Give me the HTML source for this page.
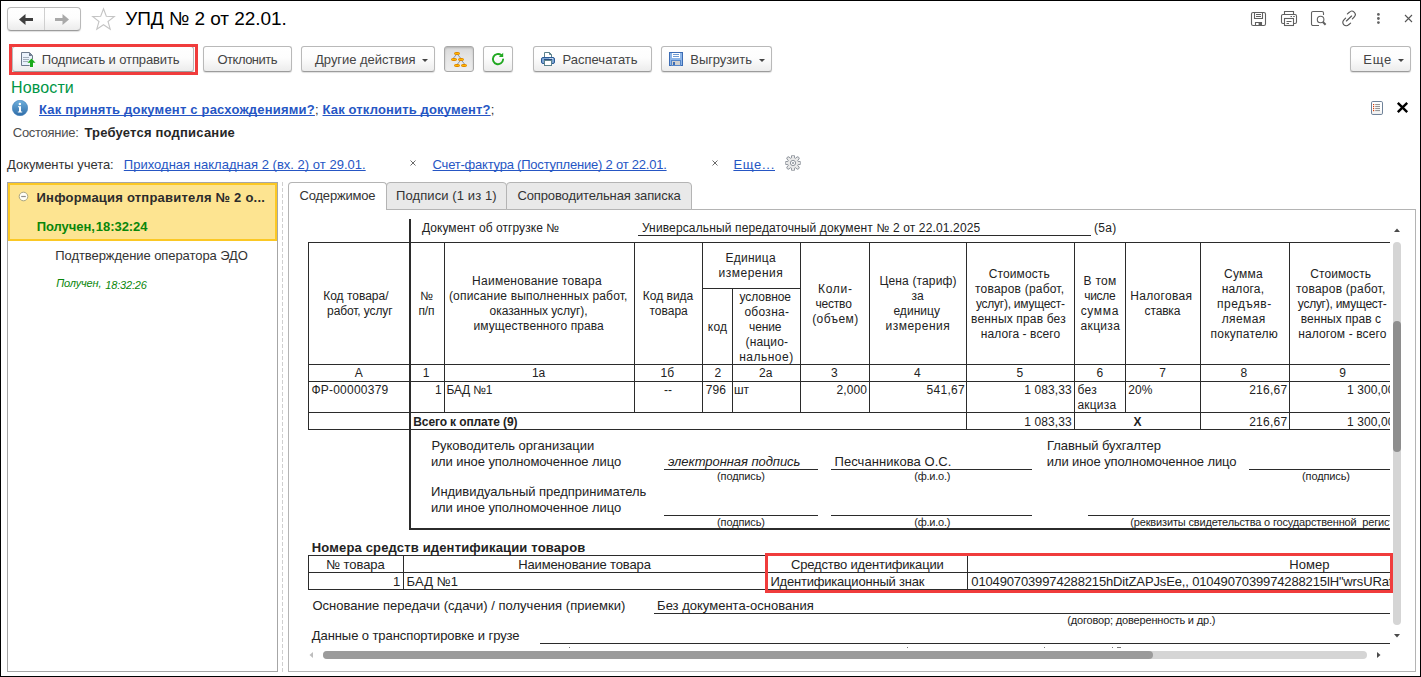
<!DOCTYPE html>
<html lang="ru">
<head>
<meta charset="utf-8">
<title>УПД № 2 от 22.01.</title>
<style>
*{margin:0;padding:0;box-sizing:border-box}
html,body{width:1421px;height:677px;overflow:hidden;background:#fff}
body{position:relative;font-family:"Liberation Sans",sans-serif;font-size:13px;color:#333;line-height:1}
.a{position:absolute;white-space:nowrap}
#frame{position:absolute;left:0;top:0;width:1421px;height:677px;border:1px solid #000;z-index:50;pointer-events:none}
.btn{position:absolute;top:46px;height:26px;border:1px solid #b9b9b9;border-bottom-color:#9c9c9c;border-radius:3px;background:linear-gradient(#ffffff 0%,#fdfdfd 45%,#ececec 100%);box-shadow:0 1px 1px rgba(0,0,0,.13);color:#444;font-size:13px;line-height:24px;white-space:nowrap}
.btn span{position:absolute;top:1px}
.btn.pressed{background:linear-gradient(#d9d9d9 0%,#e4e4e4 40%,#eeeeee 100%);border-color:#a9a9a9;box-shadow:inset 0 1px 2px rgba(0,0,0,.18)}
.dd{position:absolute;width:0;height:0;border-left:3.5px solid transparent;border-right:3.5px solid transparent;border-top:3.5px solid #444}
.lnk{color:#2656c4;text-decoration:underline;text-decoration-skip-ink:none;text-underline-offset:1px}
.hl{position:absolute;border:3px solid #f03c3c;z-index:20}
/* document */
#doc{position:absolute;left:0;top:0;width:1390px;height:648px;overflow:hidden;color:#222}
#doc .a{color:#222}
.ln{position:absolute;background:#2b2b2b}
.c{position:absolute;text-align:center;font-size:12px;line-height:15px;color:#222;white-space:nowrap;letter-spacing:.22px;text-indent:.22px}
#doc .a{letter-spacing:.1px}
.t12{font-size:12px}
.sm{font-size:10px}
</style>
<style id="fit">
#ttl{left:125.2px !important;right:auto !important;width:auto !important;text-align:left;text-indent:0;letter-spacing:-0.04px !important}
#b1{left:28.7px !important;right:auto !important;width:auto !important;text-align:left;text-indent:0;letter-spacing:-0.11px !important}
#b2{left:13.5px !important;right:auto !important;width:auto !important;text-align:left;text-indent:0;letter-spacing:-0.50px !important}
#b3{left:13.1px !important;right:auto !important;width:auto !important;text-align:left;text-indent:0;letter-spacing:-0.04px !important}
#b4{left:28.5px !important;right:auto !important;width:auto !important;text-align:left;text-indent:0;letter-spacing:0.01px !important}
#b5{left:28.3px !important;right:auto !important;width:auto !important;text-align:left;text-indent:0;letter-spacing:-0.08px !important}
#b6{left:12.2px !important;right:auto !important;width:auto !important;text-align:left;text-indent:0;letter-spacing:0.80px !important}
#nov{left:11.1px !important;right:auto !important;width:auto !important;text-align:left;text-indent:0;letter-spacing:0.13px !important}
#l1{left:-0.7px !important;right:auto !important;width:auto !important;text-align:left;text-indent:0;letter-spacing:0.20px !important}
#l2{left:282.0px !important;right:auto !important;width:auto !important;text-align:left;text-indent:0;letter-spacing:0.15px !important}
#st{left:84.4px !important;right:auto !important;width:auto !important;text-align:left;text-indent:0;letter-spacing:0.21px !important}
#sost{left:12.8px !important;right:auto !important;width:auto !important;text-align:left;text-indent:0;letter-spacing:-0.28px !important}
#du{left:7.1px !important;right:auto !important;width:auto !important;text-align:left;text-indent:0;letter-spacing:-0.05px !important}
#d1{left:123.8px !important;right:auto !important;width:auto !important;text-align:left;text-indent:0;letter-spacing:0.02px !important}
#d2{left:432.6px !important;right:auto !important;width:auto !important;text-align:left;text-indent:0;letter-spacing:-0.22px !important}
#d3{left:733.4px !important;right:auto !important;width:auto !important;text-align:left;text-indent:0;letter-spacing:0.72px !important}
#lp1{left:36.5px !important;right:auto !important;width:auto !important;text-align:left;text-indent:0;letter-spacing:0.22px !important}
#lp3{left:55.3px !important;right:auto !important;width:auto !important;text-align:left;text-indent:0;letter-spacing:-0.07px !important}
#tb1{left:299.5px !important;right:auto !important;width:auto !important;text-align:left;text-indent:0;letter-spacing:-0.19px !important}
#tb2{left:396.1px !important;right:auto !important;width:auto !important;text-align:left;text-indent:0;letter-spacing:0.09px !important}
#tb3{left:517.4px !important;right:auto !important;width:auto !important;text-align:left;text-indent:0;letter-spacing:-0.11px !important}
#t_doc{left:421.9px !important;right:auto !important;width:auto !important;text-align:left;text-indent:0;letter-spacing:0.06px !important}
#t_upd{left:641.9px !important;right:auto !important;width:auto !important;text-align:left;text-indent:0;letter-spacing:0.14px !important}
#x1{left:1094.1px !important;right:auto !important;width:auto !important;text-align:left;text-indent:0;letter-spacing:0.27px !important}
#x2{left:323.2px !important;right:auto !important;width:auto !important;text-align:left;text-indent:0;letter-spacing:0.00px !important}
#x3{left:327.1px !important;right:auto !important;width:auto !important;text-align:left;text-indent:0;letter-spacing:-0.11px !important}
#x6{left:472.1px !important;right:auto !important;width:auto !important;text-align:left;text-indent:0;letter-spacing:0.26px !important}
#x7{left:448.9px !important;right:auto !important;width:auto !important;text-align:left;text-indent:0;letter-spacing:0.19px !important}
#x8{left:489.6px !important;right:auto !important;width:auto !important;text-align:left;text-indent:0;letter-spacing:-0.05px !important}
#x9{left:473.5px !important;right:auto !important;width:auto !important;text-align:left;text-indent:0;letter-spacing:0.08px !important}
#x12{left:725.5px !important;right:auto !important;width:auto !important;text-align:left;text-indent:0;letter-spacing:0.25px !important}
#x13{left:718.5px !important;right:auto !important;width:auto !important;text-align:left;text-indent:0;letter-spacing:0.50px !important}
#x15{left:739.5px !important;right:auto !important;width:auto !important;text-align:left;text-indent:0;letter-spacing:-0.07px !important}
#x23{left:879.5px !important;right:auto !important;width:auto !important;text-align:left;text-indent:0;letter-spacing:0.14px !important}
#x26{left:885.6px !important;right:auto !important;width:auto !important;text-align:left;text-indent:0;letter-spacing:0.47px !important}
#t_fr{left:311.4px !important;right:auto !important;width:auto !important;text-align:left;text-indent:0;letter-spacing:0.23px !important}
#t_vsego{left:413.3px !important;right:auto !important;width:auto !important;text-align:left;text-indent:0;letter-spacing:-0.12px !important}
#s1{left:431.4px !important;right:auto !important;width:auto !important;text-align:left;text-indent:0;letter-spacing:-0.01px !important}
#s2{left:430.9px !important;right:auto !important;width:auto !important;text-align:left;text-indent:0;letter-spacing:-0.08px !important}
#s3{left:431.1px !important;right:auto !important;width:auto !important;text-align:left;text-indent:0;letter-spacing:-0.03px !important}
#s4{left:430.9px !important;right:auto !important;width:auto !important;text-align:left;text-indent:0;letter-spacing:-0.08px !important}
#s5{left:668.0px !important;right:auto !important;width:auto !important;text-align:left;text-indent:0;letter-spacing:-0.06px !important}
#s6{left:834.5px !important;right:auto !important;width:auto !important;text-align:left;text-indent:0;letter-spacing:0.06px !important}
#s7{left:1047.1px !important;right:auto !important;width:auto !important;text-align:left;text-indent:0;letter-spacing:-0.08px !important}
#s8{left:1046.8px !important;right:auto !important;width:auto !important;text-align:left;text-indent:0;letter-spacing:-0.10px !important}
#n1{left:311.8px !important;right:auto !important;width:auto !important;text-align:left;text-indent:0;letter-spacing:0.16px !important}
#x81{left:326.2px !important;right:auto !important;width:auto !important;text-align:left;text-indent:0;letter-spacing:-0.07px !important}
#x82{left:518.2px !important;right:auto !important;width:auto !important;text-align:left;text-indent:0;letter-spacing:-0.14px !important}
#x83{left:791.1px !important;right:auto !important;width:auto !important;text-align:left;text-indent:0;letter-spacing:-0.20px !important}
#x84{left:1289.2px !important;right:auto !important;width:auto !important;text-align:left;text-indent:0;letter-spacing:0.10px !important}
#n2{left:770.4px !important;right:auto !important;width:auto !important;text-align:left;text-indent:0;letter-spacing:-0.20px !important}
#o1{left:312.4px !important;right:auto !important;width:auto !important;text-align:left;text-indent:0;letter-spacing:0.02px !important}
#o2{left:657.1px !important;right:auto !important;width:auto !important;text-align:left;text-indent:0;letter-spacing:0.01px !important}
#o3{left:1067.2px !important;right:auto !important;width:auto !important;text-align:left;text-indent:0;letter-spacing:-0.16px !important}
#o4{left:311.8px !important;right:auto !important;width:auto !important;text-align:left;text-indent:0;letter-spacing:-0.08px !important}
#x76{left:717.0px !important;right:auto !important;width:auto !important;text-align:left;text-indent:0;letter-spacing:-0.12px !important}
#x77{left:914.2px !important;right:auto !important;width:auto !important;text-align:left;text-indent:0;letter-spacing:-0.21px !important}
#x78{left:1302.0px !important;right:auto !important;width:auto !important;text-align:left;text-indent:0;letter-spacing:-0.12px !important}
#x79{left:717.0px !important;right:auto !important;width:auto !important;text-align:left;text-indent:0;letter-spacing:-0.12px !important}
#x80{left:914.2px !important;right:auto !important;width:auto !important;text-align:left;text-indent:0;letter-spacing:-0.21px !important}
#x4{left:420.2px !important;right:auto !important;width:auto !important;text-align:left;text-indent:0;letter-spacing:0.00px !important}
#x5{left:418.4px !important;right:auto !important;width:auto !important;text-align:left;text-indent:0;letter-spacing:-0.12px !important}
#x10{left:642.8px !important;right:auto !important;width:auto !important;text-align:left;text-indent:0;letter-spacing:0.00px !important}
#x11{left:649.5px !important;right:auto !important;width:auto !important;text-align:left;text-indent:0;letter-spacing:0.00px !important}
#x14{left:707.8px !important;right:auto !important;width:auto !important;text-align:left;text-indent:0;letter-spacing:0.25px !important}
#x16{left:744.4px !important;right:auto !important;width:auto !important;text-align:left;text-indent:0;letter-spacing:0.29px !important}
#x17{left:749.0px !important;right:auto !important;width:auto !important;text-align:left;text-indent:0;letter-spacing:-0.12px !important}
#x18{left:745.5px !important;right:auto !important;width:auto !important;text-align:left;text-indent:0;letter-spacing:0.17px !important}
#x19{left:739.2px !important;right:auto !important;width:auto !important;text-align:left;text-indent:0;letter-spacing:0.50px !important}
#x20{left:818.1px !important;right:auto !important;width:auto !important;text-align:left;text-indent:0;letter-spacing:0.69px !important}
#x21{left:815.5px !important;right:auto !important;width:auto !important;text-align:left;text-indent:0;letter-spacing:-0.20px !important}
#x22{left:812.2px !important;right:auto !important;width:auto !important;text-align:left;text-indent:0;letter-spacing:0.42px !important}
#x24{left:911.5px !important;right:auto !important;width:auto !important;text-align:left;text-indent:0;letter-spacing:0.00px !important}
#x25{left:893.4px !important;right:auto !important;width:auto !important;text-align:left;text-indent:0;letter-spacing:0.04px !important}
#x27{left:988.7px !important;right:auto !important;width:auto !important;text-align:left;text-indent:0;letter-spacing:0.11px !important}
#x28{left:975.0px !important;right:auto !important;width:auto !important;text-align:left;text-indent:0;letter-spacing:0.21px !important}
#x29{left:975.9px !important;right:auto !important;width:auto !important;text-align:left;text-indent:0;letter-spacing:-0.25px !important}
#x30{left:971.1px !important;right:auto !important;width:auto !important;text-align:left;text-indent:0;letter-spacing:0.16px !important}
#x31{left:980.8px !important;right:auto !important;width:auto !important;text-align:left;text-indent:0;letter-spacing:0.08px !important}
#x32{left:1083.6px !important;right:auto !important;width:auto !important;text-align:left;text-indent:0;letter-spacing:0.25px !important}
#x33{left:1084.2px !important;right:auto !important;width:auto !important;text-align:left;text-indent:0;letter-spacing:-0.30px !important}
#x34{left:1080.7px !important;right:auto !important;width:auto !important;text-align:left;text-indent:0;letter-spacing:0.65px !important}
#x35{left:1080.6px !important;right:auto !important;width:auto !important;text-align:left;text-indent:0;letter-spacing:0.32px !important}
#x36{left:1130.2px !important;right:auto !important;width:auto !important;text-align:left;text-indent:0;letter-spacing:0.31px !important}
#x37{left:1144.6px !important;right:auto !important;width:auto !important;text-align:left;text-indent:0;letter-spacing:-0.16px !important}
#x38{left:1224.0px !important;right:auto !important;width:auto !important;text-align:left;text-indent:0;letter-spacing:0.25px !important}
#x39{left:1221.7px !important;right:auto !important;width:auto !important;text-align:left;text-indent:0;letter-spacing:0.18px !important}
#x40{left:1217.0px !important;right:auto !important;width:auto !important;text-align:left;text-indent:0;letter-spacing:0.50px !important}
#x41{left:1221.7px !important;right:auto !important;width:auto !important;text-align:left;text-indent:0;letter-spacing:0.38px !important}
#x42{left:1210.6px !important;right:auto !important;width:auto !important;text-align:left;text-indent:0;letter-spacing:0.22px !important}
#x43{left:1310.2px !important;right:auto !important;width:auto !important;text-align:left;text-indent:0;letter-spacing:0.09px !important}
#x44{left:1296.0px !important;right:auto !important;width:auto !important;text-align:left;text-indent:0;letter-spacing:0.23px !important}
#x45{left:1297.8px !important;right:auto !important;width:auto !important;text-align:left;text-indent:0;letter-spacing:-0.26px !important}
#x46{left:1300.8px !important;right:auto !important;width:auto !important;text-align:left;text-indent:0;letter-spacing:0.04px !important}
#x47{left:1298.2px !important;right:auto !important;width:auto !important;text-align:left;text-indent:0;letter-spacing:0.12px !important}
#x48{left:354.8px !important;right:auto !important;width:auto !important;text-align:left;text-indent:0;letter-spacing:0.00px !important}
#x49{left:422.8px !important;right:auto !important;width:auto !important;text-align:left;text-indent:0;letter-spacing:0.00px !important}
#x50{left:531.9px !important;right:auto !important;width:auto !important;text-align:left;text-indent:0;letter-spacing:0.00px !important}
#x51{left:660.6px !important;right:auto !important;width:auto !important;text-align:left;text-indent:0;letter-spacing:0.00px !important}
#x52{left:714.4px !important;right:auto !important;width:auto !important;text-align:left;text-indent:0;letter-spacing:0.00px !important}
#x53{left:759.0px !important;right:auto !important;width:auto !important;text-align:left;text-indent:0;letter-spacing:0.00px !important}
#x54{left:831.1px !important;right:auto !important;width:auto !important;text-align:left;text-indent:0;letter-spacing:0.00px !important}
#x55{left:913.9px !important;right:auto !important;width:auto !important;text-align:left;text-indent:0;letter-spacing:0.00px !important}
#x56{left:1016.6px !important;right:auto !important;width:auto !important;text-align:left;text-indent:0;letter-spacing:0.00px !important}
#x57{left:1096.4px !important;right:auto !important;width:auto !important;text-align:left;text-indent:0;letter-spacing:0.00px !important}
#x58{left:1159.2px !important;right:auto !important;width:auto !important;text-align:left;text-indent:0;letter-spacing:0.00px !important}
#x59{left:1240.5px !important;right:auto !important;width:auto !important;text-align:left;text-indent:0;letter-spacing:0.00px !important}
#x60{left:1339.3px !important;right:auto !important;width:auto !important;text-align:left;text-indent:0;letter-spacing:0.00px !important}
#x61{left:435.0px !important;right:auto !important;width:auto !important;text-align:left;text-indent:0;letter-spacing:0.00px !important}
#x62{left:446.5px !important;right:auto !important;width:auto !important;text-align:left;text-indent:0;letter-spacing:-0.20px !important}
#x63{left:664.1px !important;right:auto !important;width:auto !important;text-align:left;text-indent:0;letter-spacing:0.00px !important}
#x64{left:705.8px !important;right:auto !important;width:auto !important;text-align:left;text-indent:0;letter-spacing:0.00px !important}
#x65{left:733.9px !important;right:auto !important;width:auto !important;text-align:left;text-indent:0;letter-spacing:0.00px !important}
#x66{left:836.5px !important;right:auto !important;width:auto !important;text-align:left;text-indent:0;letter-spacing:0.12px !important}
#x67{left:926.5px !important;right:auto !important;width:auto !important;text-align:left;text-indent:0;letter-spacing:0.30px !important}
#x68{left:1024.3px !important;right:auto !important;width:auto !important;text-align:left;text-indent:0;letter-spacing:0.09px !important}
#bez{left:1077.6px !important;right:auto !important;width:auto !important;text-align:left;text-indent:0;letter-spacing:0.20px !important}
#akc{left:1077.4px !important;right:auto !important;width:auto !important;text-align:left;text-indent:0;letter-spacing:0.20px !important}
#x69{left:1128.2px !important;right:auto !important;width:auto !important;text-align:left;text-indent:0;letter-spacing:0.15px !important}
#x70{left:1249.2px !important;right:auto !important;width:auto !important;text-align:left;text-indent:0;letter-spacing:0.26px !important}
#x72{left:1024.3px !important;right:auto !important;width:auto !important;text-align:left;text-indent:0;letter-spacing:0.09px !important}
#x74{left:1249.2px !important;right:auto !important;width:auto !important;text-align:left;text-indent:0;letter-spacing:0.26px !important}
#s9{left:1130.3px !important;right:auto !important;width:auto !important;text-align:left;text-indent:0;letter-spacing:-0.16px !important}
#n3{left:971.3px !important;right:auto !important;width:auto !important;text-align:left;text-indent:0;letter-spacing:-0.14px !important}
#lp4{left:56.3px !important;right:auto !important;width:auto !important;text-align:left;text-indent:0;letter-spacing:-0.17px !important}
#lp2{left:36.7px !important;right:auto !important;width:auto !important;text-align:left;text-indent:0;letter-spacing:-0.05px !important}
#x85{left:393.0px !important;right:auto !important;width:auto !important;text-align:left;text-indent:0;letter-spacing:0.00px !important}
#x86{left:406.6px !important;right:auto !important;width:auto !important;text-align:left;text-indent:0;letter-spacing:0.10px !important}
</style>
</head>
<body>
<!-- TITLE BAR -->
<div id="titlebar">
<div class="a" style="left:7px;top:7px;width:74px;height:24px;border:1px solid #b9b9b9;border-bottom-color:#9c9c9c;border-radius:4px;background:linear-gradient(#fff 0%,#fdfdfd 45%,#ececec 100%);box-shadow:0 1px 1px rgba(0,0,0,.13)"></div>
<div class="a" style="left:44px;top:8px;width:1px;height:22px;background:#cfcfcf"></div>
<svg class="a" style="left:7px;top:7px" width="74" height="24" viewBox="0 0 74 24">
<path d="M12 12.5 L18.5 7 V11 H26 V14 H18.5 V18 Z" fill="#3f3f3f"/>
<path d="M62 12.5 L55.5 7 V11 H48 V14 H55.5 V18 Z" fill="#a9a9a9"/>
</svg>
<svg class="a" style="left:91px;top:7px" width="25" height="24" viewBox="0 0 25 24">
<path d="M12.5 1.8 L15.3 9.3 L23.3 9.6 L17 14.5 L19.2 22.2 L12.5 17.7 L5.8 22.2 L8 14.5 L1.7 9.6 L9.7 9.3 Z" fill="#fff" stroke="#c4c4c4" stroke-width="1.1" stroke-linejoin="miter"/>
</svg>
<div class="a" style="left:125px;top:8px;font-size:19px;line-height:22px;color:#000" id="ttl">УПД № 2 от 22.01.</div>
</div>
<!-- TOOLBAR -->
<div id="toolbar">
<div class="btn" style="left:12px;width:182px"><span id="b1" style="left:29px">Подписать и отправить</span></div>
<div class="hl" style="left:9px;top:44px;width:189px;height:31px"></div>
<div class="btn" style="left:203px;width:89px"><span id="b2" style="left:13px">Отклонить</span></div>
<div class="btn" style="left:301px;width:134px"><span id="b3" style="left:13px">Другие действия</span><i class="dd" style="left:120px;top:12px"></i></div>
<div class="btn pressed" style="left:444px;width:30px"></div>
<div class="btn" style="left:483px;width:30px"></div>
<div class="btn" style="left:533px;width:119px"><span id="b4" style="left:29px">Распечатать</span></div>
<div class="btn" style="left:661px;width:111px"><span id="b5" style="left:29px">Выгрузить</span><i class="dd" style="left:97px;top:12px"></i></div>
<div class="btn" style="left:1350px;width:61px"><span id="b6" style="left:13px">Еще</span><i class="dd" style="left:47px;top:12px"></i></div>
</div>
<!-- INFO -->
<div id="info">
<div class="a" style="left:12px;top:79px;font-size:16px;line-height:18px;color:#009646" id="nov">Новости</div>
<svg class="a" style="left:12px;top:100px" width="16" height="16" viewBox="0 0 16 16">
<defs><linearGradient id="gi" x1="0" y1="0" x2="0" y2="1"><stop offset="0" stop-color="#6fb0dc"/><stop offset="1" stop-color="#2f6ca8"/></linearGradient></defs>
<circle cx="8" cy="8" r="7.7" fill="url(#gi)" stroke="#3d7cb8" stroke-width=".6"/>
<circle cx="7.9" cy="3.9" r="1.25" fill="#fff"/>
<path d="M6 6.3 H9 V11.6 H10.2 V12.6 H5.8 V11.6 H7 V7.3 H6 Z" fill="#fff"/>
</svg>
<div class="a" style="left:39px;top:102px;line-height:15px;color:#333"><b class="lnk" id="l1">Как принять документ с расхождениями?</b>;<b class="lnk" id="l2" style="margin-left:4px">Как отклонить документ?</b>;</div>
<div class="a" style="left:12px;top:125px;line-height:15px;color:#4d4d4d" id="sost">Состояние:</div>
<div class="a" style="left:84px;top:125px;line-height:15px;color:#262626;font-weight:bold" id="st">Требуется подписание</div>
<div class="a" style="left:7px;top:157px;line-height:15px;color:#333" id="du">Документы учета:</div>
<div class="a lnk" style="left:125px;top:157px;line-height:15px" id="d1">Приходная накладная 2 (вх. 2) от 29.01.</div>
<div class="a lnk" style="left:432px;top:157px;line-height:15px" id="d2">Счет-фактура (Поступление) 2 от 22.01.</div>
<div class="a lnk" style="left:734px;top:157px;line-height:15px" id="d3">Еще...</div>
<svg class="a" style="left:409px;top:159px" width="8" height="8" viewBox="0 0 8 8"><path d="M1.5 1.5 L6.5 6.5 M6.5 1.5 L1.5 6.5" stroke="#5a5a5a" stroke-width=".9" fill="none"/></svg>
<svg class="a" style="left:711px;top:159px" width="8" height="8" viewBox="0 0 8 8"><path d="M1.5 1.5 L6.5 6.5 M6.5 1.5 L1.5 6.5" stroke="#5a5a5a" stroke-width=".9" fill="none"/></svg>
<svg class="a" style="left:785px;top:155px" width="16" height="16" viewBox="-8 -8 16 16" id="gear">
<g fill="#e9e9e9" stroke="#8d939b" stroke-width="1">
<path d="M7.15 -1.45 A1.6 1.6 0 0 1 7.15 1.45 L5.19 1.49 A5.4 5.4 0 0 1 4.72 2.61 L6.08 4.03 A1.6 1.6 0 0 1 4.03 6.08 L2.61 4.72 A5.4 5.4 0 0 1 1.49 5.19 L1.45 7.15 A1.6 1.6 0 0 1 -1.45 7.15 L-1.49 5.19 A5.4 5.4 0 0 1 -2.61 4.72 L-4.03 6.08 A1.6 1.6 0 0 1 -6.08 4.03 L-4.72 2.61 A5.4 5.4 0 0 1 -5.19 1.49 L-7.15 1.45 A1.6 1.6 0 0 1 -7.15 -1.45 L-5.19 -1.49 A5.4 5.4 0 0 1 -4.72 -2.61 L-6.08 -4.03 A1.6 1.6 0 0 1 -4.03 -6.08 L-2.61 -4.72 A5.4 5.4 0 0 1 -1.49 -5.19 L-1.45 -7.15 A1.6 1.6 0 0 1 1.45 -7.15 L1.49 -5.19 A5.4 5.4 0 0 1 2.61 -4.72 L4.03 -6.08 A1.6 1.6 0 0 1 6.08 -4.03 L4.72 -2.61 A5.4 5.4 0 0 1 5.19 -1.49 Z"/>
<circle r="2.6" fill="#fff"/><circle r="1" fill="#8d939b" stroke="none"/>
</g></svg>
</div>
<!-- LEFT -->
<div id="left">
<div class="a" style="left:7px;top:182px;width:271px;height:490px;border:1px solid #a6a6a6;background:#fff"></div>
<div class="a" style="left:8px;top:183px;width:269px;height:58px;border:2px solid #fbc824;background:#fde491"></div>
<svg class="a" style="left:18px;top:191px" width="11" height="11" viewBox="0 0 11 11"><circle cx="5.5" cy="5.5" r="4.3" fill="#fffef6" stroke="#a9a582" stroke-width="1"/><path d="M3.2 5.5 H7.8" stroke="#8c8c8c" stroke-width="1.2"/></svg>
<div class="a" style="left:37px;top:190px;line-height:15px;font-weight:bold;color:#2b2b2b" id="lp1">Информация отправителя № 2 о...</div>
<div class="a" style="left:37px;top:219px;line-height:15px;font-weight:bold;color:#0a860a" id="lp2">Получен,<span style="margin-left:1px">18:32:24</span></div>
<div class="a" style="left:56px;top:248px;line-height:15px;color:#333" id="lp3">Подтверждение оператора ЭДО</div>
<div class="a" style="left:56px;top:277px;line-height:13px;font-size:11px;font-style:italic;color:#0a860a" id="lp4" >Получен,<span style="position:relative;top:2px;margin-left:4px">18:32:26</span></div>
<div class="a" style="left:282px;top:182px;width:1px;height:490px;background:repeating-linear-gradient(#cfcfcf 0,#cfcfcf 4px,#fff 4px,#fff 6px)"></div>
</div>
<!-- TABS -->
<div id="tabs">
<div class="a" style="left:288px;top:209px;width:1128px;height:463px;border:1px solid #b4b4b4;background:#fff"></div>
<div class="a tab" style="left:386px;top:182px;width:121px;height:28px;border:1px solid #b4b4b4;border-radius:4px 4px 0 0;background:#e9e9e9"></div>
<div class="a tab" style="left:506px;top:182px;width:186px;height:28px;border:1px solid #b4b4b4;border-radius:4px 4px 0 0;background:#e9e9e9"></div>
<div class="a tab" style="left:288px;top:182px;width:99px;height:28px;border:1px solid #b4b4b4;border-bottom:none;border-radius:4px 4px 0 0;background:#fff"></div>
<div class="a" style="left:299px;top:188px;line-height:15px;color:#333" id="tb1">Содержимое</div>
<div class="a" style="left:397px;top:188px;line-height:15px;color:#333" id="tb2">Подписи (1 из 1)</div>
<div class="a" style="left:517px;top:188px;line-height:15px;color:#333" id="tb3">Сопроводительная записка</div>
</div>
<!-- DOC -->
<div id="doc">
<div class="a" id="t_doc" style="left:422px;top:221px;font-size:12px;line-height:15px;">Документ об отгрузке №</div>
<div class="a" id="t_upd" style="left:641px;top:221px;font-size:12px;line-height:15px;">Универсальный передаточный документ № 2 от 22.01.2025</div>
<i class="ln" style="left:638px;top:235px;width:453px;height:1px"></i>
<div class="a" id="x1" style="left:1094px;top:221px;font-size:12px;line-height:15px;">(5а)</div>
<i class="ln" style="left:409px;top:219px;width:2px;height:311px"></i>
<i class="ln" style="left:308px;top:242px;width:1084px;height:1px"></i>
<i class="ln" style="left:702px;top:288px;width:98px;height:1px"></i>
<i class="ln" style="left:308px;top:364px;width:1084px;height:1px"></i>
<i class="ln" style="left:308px;top:381px;width:1084px;height:1px"></i>
<i class="ln" style="left:308px;top:412px;width:1084px;height:1px"></i>
<i class="ln" style="left:308px;top:429px;width:1084px;height:1px"></i>
<i class="ln" style="left:308px;top:242px;width:1px;height:188px"></i>
<i class="ln" style="left:444px;top:242px;width:1px;height:171px"></i>
<i class="ln" style="left:634px;top:242px;width:1px;height:171px"></i>
<i class="ln" style="left:702px;top:242px;width:1px;height:171px"></i>
<i class="ln" style="left:800px;top:242px;width:1px;height:171px"></i>
<i class="ln" style="left:869px;top:242px;width:1px;height:171px"></i>
<i class="ln" style="left:966px;top:242px;width:1px;height:188px"></i>
<i class="ln" style="left:1074px;top:242px;width:1px;height:188px"></i>
<i class="ln" style="left:1125px;top:242px;width:1px;height:171px"></i>
<i class="ln" style="left:1200px;top:242px;width:1px;height:188px"></i>
<i class="ln" style="left:1289px;top:242px;width:1px;height:188px"></i>
<i class="ln" style="left:1392px;top:242px;width:1px;height:188px"></i>
<i class="ln" style="left:732px;top:288px;width:1px;height:125px"></i>
<div class="c" id="x2" style="left:309px;top:289px;width:100px;">Код товара/</div>
<div class="c" id="x3" style="left:309px;top:304px;width:100px;">работ, услуг</div>
<div class="c" id="x4" style="left:411px;top:289px;width:33px;">№</div>
<div class="c" id="x5" style="left:411px;top:304px;width:33px;">п/п</div>
<div class="c" id="x6" style="left:445px;top:274px;width:189px;">Наименование товара</div>
<div class="c" id="x7" style="left:445px;top:289px;width:189px;">(описание выполненных работ,</div>
<div class="c" id="x8" style="left:445px;top:304px;width:189px;">оказанных услуг),</div>
<div class="c" id="x9" style="left:445px;top:319px;width:189px;">имущественного права</div>
<div class="c" id="x10" style="left:635px;top:289px;width:67px;">Код вида</div>
<div class="c" id="x11" style="left:635px;top:304px;width:67px;">товара</div>
<div class="c" id="x12" style="left:703px;top:251px;width:97px;">Единица</div>
<div class="c" id="x13" style="left:703px;top:266px;width:97px;">измерения</div>
<div class="c" id="x14" style="left:703px;top:320px;width:29px;">код</div>
<div class="c" id="x15" style="left:733px;top:290px;width:67px;">условное</div>
<div class="c" id="x16" style="left:733px;top:305px;width:67px;">обозна-</div>
<div class="c" id="x17" style="left:733px;top:320px;width:67px;">чение</div>
<div class="c" id="x18" style="left:733px;top:335px;width:67px;">(нацио-</div>
<div class="c" id="x19" style="left:733px;top:350px;width:67px;">нальное)</div>
<div class="c" id="x20" style="left:801px;top:282px;width:68px;">Коли-</div>
<div class="c" id="x21" style="left:801px;top:297px;width:68px;">чество</div>
<div class="c" id="x22" style="left:801px;top:312px;width:68px;">(объем)</div>
<div class="c" id="x23" style="left:870px;top:274px;width:96px;">Цена (тариф)</div>
<div class="c" id="x24" style="left:870px;top:289px;width:96px;">за</div>
<div class="c" id="x25" style="left:870px;top:304px;width:96px;">единицу</div>
<div class="c" id="x26" style="left:870px;top:319px;width:96px;">измерения</div>
<div class="c" id="x27" style="left:967px;top:267px;width:107px;">Стоимость</div>
<div class="c" id="x28" style="left:967px;top:282px;width:107px;">товаров (работ,</div>
<div class="c" id="x29" style="left:967px;top:297px;width:107px;">услуг), имущест-</div>
<div class="c" id="x30" style="left:967px;top:312px;width:107px;">венных прав без</div>
<div class="c" id="x31" style="left:967px;top:327px;width:107px;">налога - всего</div>
<div class="c" id="x32" style="left:1075px;top:274px;width:50px;">В том</div>
<div class="c" id="x33" style="left:1075px;top:289px;width:50px;">числе</div>
<div class="c" id="x34" style="left:1075px;top:304px;width:50px;">сумма</div>
<div class="c" id="x35" style="left:1075px;top:319px;width:50px;">акциза</div>
<div class="c" id="x36" style="left:1126px;top:289px;width:74px;">Налоговая</div>
<div class="c" id="x37" style="left:1126px;top:304px;width:74px;">ставка</div>
<div class="c" id="x38" style="left:1201px;top:267px;width:88px;">Сумма</div>
<div class="c" id="x39" style="left:1201px;top:282px;width:88px;">налога,</div>
<div class="c" id="x40" style="left:1201px;top:297px;width:88px;">предъяв-</div>
<div class="c" id="x41" style="left:1201px;top:312px;width:88px;">ляемая</div>
<div class="c" id="x42" style="left:1201px;top:327px;width:88px;">покупателю</div>
<div class="c" id="x43" style="left:1290px;top:267px;width:102px;">Стоимость</div>
<div class="c" id="x44" style="left:1290px;top:282px;width:102px;">товаров (работ,</div>
<div class="c" id="x45" style="left:1290px;top:297px;width:102px;">услуг), имущест-</div>
<div class="c" id="x46" style="left:1290px;top:312px;width:102px;">венных прав с</div>
<div class="c" id="x47" style="left:1290px;top:327px;width:102px;">налогом - всего</div>
<div class="c" id="x48" style="left:309px;top:366px;width:100px;">А</div>
<div class="c" id="x49" style="left:411px;top:366px;width:33px;">1</div>
<div class="c" id="x50" style="left:445px;top:366px;width:189px;">1а</div>
<div class="c" id="x51" style="left:635px;top:366px;width:67px;">1б</div>
<div class="c" id="x52" style="left:703px;top:366px;width:29px;">2</div>
<div class="c" id="x53" style="left:733px;top:366px;width:67px;">2а</div>
<div class="c" id="x54" style="left:801px;top:366px;width:68px;">3</div>
<div class="c" id="x55" style="left:870px;top:366px;width:96px;">4</div>
<div class="c" id="x56" style="left:967px;top:366px;width:107px;">5</div>
<div class="c" id="x57" style="left:1075px;top:366px;width:50px;">6</div>
<div class="c" id="x58" style="left:1126px;top:366px;width:74px;">7</div>
<div class="c" id="x59" style="left:1201px;top:366px;width:88px;">8</div>
<div class="c" id="x60" style="left:1290px;top:366px;width:102px;">9</div>
<div class="a" id="t_fr" style="left:311px;top:383px;font-size:12px;line-height:15px;">ФР-00000379</div>
<div class="a" id="x61" style="right:948px;top:383px;font-size:12px;line-height:15px;">1</div>
<div class="a" id="x62" style="left:447px;top:383px;font-size:12px;line-height:15px;">БАД №1</div>
<div class="c" id="x63" style="left:635px;top:383px;width:67px;">--</div>
<div class="c" id="x64" style="left:703px;top:383px;width:29px;">796</div>
<div class="a" id="x65" style="left:735px;top:383px;font-size:12px;line-height:15px;">шт</div>
<div class="a" id="x66" style="right:523px;top:383px;font-size:12px;line-height:15px;">2,000</div>
<div class="a" id="x67" style="right:425px;top:383px;font-size:12px;line-height:15px;">541,67</div>
<div class="a" id="x68" style="right:318px;top:383px;font-size:12px;line-height:15px;">1 083,33</div>
<div class="a" id="bez" style="left:1077px;top:383px;font-size:12px;line-height:15px">без</div><div class="a" id="akc" style="left:1077px;top:398px;font-size:12px;line-height:15px">акциза</div>
<div class="a" id="x69" style="left:1128px;top:383px;font-size:12px;line-height:15px;">20%</div>
<div class="a" id="x70" style="right:103px;top:383px;font-size:12px;line-height:15px;">216,67</div>
<div class="a" id="x71" style="left:1347px;top:383px;font-size:12px;line-height:15px;">1 300,00</div>
<div class="a" id="t_vsego" style="left:414px;top:415px;font-size:12px;line-height:15px;font-weight:bold;">Всего к оплате (9)</div>
<div class="a" id="x72" style="right:318px;top:415px;font-size:12px;line-height:15px;">1 083,33</div>
<div class="c" id="x73" style="left:1075px;top:415px;width:125px;"><b>X</b></div>
<div class="a" id="x74" style="right:103px;top:415px;font-size:12px;line-height:15px;">216,67</div>
<div class="a" id="x75" style="left:1347px;top:415px;font-size:12px;line-height:15px;">1 300,00</div>
<div class="a" id="s1" style="left:432px;top:438px;font-size:13px;line-height:15px;">Руководитель организации</div>
<div class="a" id="s2" style="left:432px;top:454px;font-size:13px;line-height:15px;">или иное уполномоченное лицо</div>
<div class="a" id="s3" style="left:432px;top:484px;font-size:13px;line-height:15px;">Индивидуальный предприниматель</div>
<div class="a" id="s4" style="left:432px;top:500px;font-size:13px;line-height:15px;">или иное уполномоченное лицо</div>
<div class="a" id="s5" style="left:668px;top:454px;font-size:13px;line-height:15px;font-style:italic;">электронная подпись</div>
<div class="a" id="s6" style="left:835px;top:454px;font-size:13px;line-height:15px;">Песчанникова О.С.</div>
<i class="ln" style="left:664px;top:469px;width:154px;height:1px"></i>
<i class="ln" style="left:831px;top:469px;width:201px;height:1px"></i>
<i class="ln" style="left:1249px;top:469px;width:143px;height:1px"></i>
<div class="a" id="s7" style="left:1048px;top:438px;font-size:13px;line-height:15px;">Главный бухгалтер</div>
<div class="a" id="s8" style="left:1048px;top:454px;font-size:13px;line-height:15px;">или иное уполномоченное лицо</div>
<div class="c" id="x76" style="left:664px;top:470px;width:154px;font-size:11px;line-height:13px;">(подпись)</div>
<div class="c" id="x77" style="left:831px;top:470px;width:201px;font-size:11px;line-height:13px;">(ф.и.о.)</div>
<div class="c" id="x78" style="left:1249px;top:470px;width:154px;font-size:11px;line-height:13px;">(подпись)</div>
<i class="ln" style="left:664px;top:515px;width:154px;height:1px"></i>
<i class="ln" style="left:831px;top:515px;width:201px;height:1px"></i>
<i class="ln" style="left:1088px;top:515px;width:304px;height:1px"></i>
<div class="c" id="x79" style="left:664px;top:516px;width:154px;font-size:11px;line-height:13px;">(подпись)</div>
<div class="c" id="x80" style="left:831px;top:516px;width:201px;font-size:11px;line-height:13px;">(ф.и.о.)</div>
<div class="a" id="s9" style="left:1130px;top:516px;font-size:11px;line-height:13px;">(реквизиты свидетельства о государственной&nbsp; регистрации индивидуального предпринимателя)</div>
<i class="ln" style="left:409px;top:528px;width:983px;height:2px"></i>
<div class="a" id="n1" style="left:312px;top:540px;font-size:13px;line-height:15px;font-weight:bold;">Номера средств идентификации товаров</div>
<i class="ln" style="left:308px;top:555px;width:1084px;height:1px"></i>
<i class="ln" style="left:308px;top:572px;width:1084px;height:1px"></i>
<i class="ln" style="left:308px;top:589px;width:1084px;height:1px"></i>
<i class="ln" style="left:308px;top:555px;width:1px;height:35px"></i>
<i class="ln" style="left:403px;top:555px;width:1px;height:35px"></i>
<i class="ln" style="left:767px;top:555px;width:1px;height:35px"></i>
<i class="ln" style="left:967px;top:555px;width:1px;height:35px"></i>
<div class="c" id="x81" style="left:309px;top:557px;width:94px;font-size:13px;letter-spacing:0;text-indent:0;">№ товара</div>
<div class="c" id="x82" style="left:404px;top:557px;width:363px;font-size:13px;letter-spacing:0;text-indent:0;">Наименование товара</div>
<div class="c" id="x83" style="left:768px;top:557px;width:199px;font-size:13px;letter-spacing:0;text-indent:0;">Средство идентификации</div>
<div class="a" id="x84" style="left:1290px;top:557px;font-size:13px;line-height:15px;">Номер</div>
<div class="a" id="x85" style="right:990px;top:574px;font-size:13px;line-height:15px;">1</div>
<div class="a" id="x86" style="left:407px;top:574px;font-size:13px;line-height:15px;">БАД №1</div>
<div class="a" id="n2" style="left:771px;top:574px;font-size:13px;line-height:15px;">Идентификационный знак</div>
<div class="a" id="n3" style="left:972px;top:574px;font-size:13px;line-height:15px;">0104907039974288215hDitZAPJsEe,, 0104907039974288215lH"wrsURafB</div>
<div class="a" id="o1" style="left:312px;top:598px;font-size:13px;line-height:15px;">Основание передачи (сдачи) / получения (приемки)</div>
<div class="a" id="o2" style="left:658px;top:598px;font-size:13px;line-height:15px;">Без документа-основания</div>
<i class="ln" style="left:654px;top:613px;width:738px;height:1px"></i>
<div class="a" id="o3" style="left:1067px;top:614px;font-size:11px;line-height:13px;">(договор; доверенность и др.)</div>
<div class="a" id="o4" style="left:312px;top:628px;font-size:13px;line-height:15px;">Данные о транспортировке и грузе</div>
<i class="ln" style="left:540px;top:643px;width:852px;height:1px"></i>
<i class="ln" style="left:569px;top:647px;width:1px;height:1px;background:#777"></i>
<i class="ln" style="left:907px;top:647px;width:1px;height:1px;background:#777"></i>
<i class="ln" style="left:1044px;top:647px;width:1px;height:1px;background:#777"></i>
<i class="ln" style="left:1112px;top:647px;width:1px;height:1px;background:#777"></i>
<i class="ln" style="left:1117px;top:647px;width:4px;height:1px;background:#777"></i>
</div>
<!-- SCROLLBARS -->
<div id="scroll">
<div class="hl" style="left:765px;top:553px;width:628px;height:40px"></div>
<div class="a" style="left:1393px;top:242px;width:8px;height:383px;border-radius:4px;background:#d5d5d5"></div>
<div class="a" style="left:1393px;top:321px;width:8px;height:131px;border-radius:4px;background:#8e8e8e"></div>
<svg class="a" style="left:1393px;top:227px" width="8" height="6" viewBox="0 0 8 6"><path d="M1 5 L4 1.5 L7 5 Z" fill="#4a4a4a"/></svg>
<svg class="a" style="left:1393px;top:633px" width="8" height="6" viewBox="0 0 8 6"><path d="M1 1 L4 4.5 L7 1 Z" fill="#4a4a4a"/></svg>
<div class="a" style="left:323px;top:651px;width:1044px;height:8px;border-radius:4px;background:#d5d5d5"></div>
<div class="a" style="left:323px;top:651px;width:830px;height:8px;border-radius:4px;background:#9b9b9b"></div>
<svg class="a" style="left:308px;top:651px" width="6" height="8" viewBox="0 0 6 8"><path d="M5 1 L1.5 4 L5 7 Z" fill="#bdbdbd"/></svg>
<svg class="a" style="left:1376px;top:651px" width="6" height="8" viewBox="0 0 6 8"><path d="M1 1 L4.5 4 L1 7 Z" fill="#4a4a4a"/></svg>
</div>
<div id="icons">
<!-- sign & send -->
<svg class="a" style="left:20px;top:51px" width="17" height="17" viewBox="0 0 17 17">
<path d="M1.5 1.5 H9.5 L12.5 4.5 V14.5 H1.5 Z" fill="#e9f1fb" stroke="#6c7a8c" stroke-width="1"/>
<path d="M9 1.5 V5 H12.5 Z" fill="#6c7a8c"/>
<path d="M3 6.5 H9 M3 8.5 H9 M3 10.5 H8" stroke="#a3aebb" stroke-width="1"/>
<path d="M11.5 7.6 L15.6 11.7 H13 V16 H10 V11.7 H7.4 Z" fill="#1aaa1a" stroke="#fff" stroke-width=".7" paint-order="stroke"/>
</svg>
<!-- org chart -->
<svg class="a" style="left:450px;top:51px" width="18" height="17" viewBox="0 0 18 17">
<path d="M6 4 L3.5 7 M8 4 L10.5 7 M10 10 L7.5 13 M12 10 L14.5 13" stroke="#8592a3" stroke-width="1" fill="none"/>
<g fill="#ffb900" stroke="#e08600" stroke-width="1">
<rect x="4.5" y="1.5" width="5" height="2" rx="1"/>
<rect x="1.5" y="7.5" width="5" height="2" rx="1"/>
<rect x="8.5" y="7.5" width="5" height="2" rx="1"/>
<rect x="4.5" y="13.5" width="5" height="2" rx="1"/>
<rect x="11.5" y="13.5" width="5" height="2" rx="1"/>
</g></svg>
<!-- refresh -->
<svg class="a" style="left:490px;top:51px" width="16" height="16" viewBox="0 0 16 16">
<path d="M11.2 4.1 A5.1 5.1 0 1 0 13.1 8.5" fill="none" stroke="#21a821" stroke-width="1.9" stroke-linecap="round"/>
<path d="M13.2 1.8 V5.9 H8.9 Z" fill="#21a821"/>
</svg>
<!-- printer colour -->
<svg class="a" style="left:540px;top:51px" width="17" height="16" viewBox="0 0 17 16">
<path d="M4.5 6.5 V1.5 H9.5 L11.5 3.5 V6.5" fill="#fff" stroke="#5c828c" stroke-width="1"/>
<path d="M9.5 1.5 V3.5 H11.5" fill="none" stroke="#5c828c" stroke-width="1"/>
<rect x="1.5" y="6.5" width="13" height="6" rx="1.5" fill="#7fa6d4" stroke="#2b5b96" stroke-width="1"/>
<path d="M4 8.5 H12" stroke="#2b4f80" stroke-width="1"/>
<rect x="9.6" y="7" width="1" height="1" fill="#fff"/><rect x="11.6" y="7" width="1" height="1" fill="#fff"/>
<rect x="4.5" y="9.5" width="7" height="5" fill="#fff" stroke="#5c828c" stroke-width="1"/>
</svg>
<!-- floppy colour -->
<svg class="a" style="left:668px;top:51px" width="16" height="16" viewBox="0 0 16 16">
<rect x="1.5" y="1.5" width="13" height="13" fill="#8db6e9" stroke="#3c6cb4" stroke-width="1"/>
<rect x="4" y="2" width="8" height="5" fill="#fff"/>
<path d="M5 3.5 H11 M5 5.5 H11" stroke="#6f9bd2" stroke-width="1"/>
<rect x="3.5" y="9.5" width="9" height="5" fill="#cfcfcf" stroke="#5585c8" stroke-width="1"/>
<rect x="5" y="11" width="2" height="3" fill="#3c6cb4"/>
</svg>
<!-- top-right: save -->
<svg class="a" style="left:1250px;top:11px" width="17" height="16" viewBox="0 0 17 16">
<g fill="none" stroke="#606060" stroke-width="1.1">
<rect x="1.5" y="1.5" width="14" height="13" rx="1.6"/>
<path d="M4.5 1.5 V7.5 H12.5 V1.5"/>
<path d="M6 3.5 H11 M6 5.5 H11" stroke-width="1"/>
<path d="M5.5 14.5 V11.5 H11.5 V14.5"/>
</g><rect x="8.6" y="11.6" width="3" height="3" fill="#606060"/>
</svg>
<!-- top-right: print -->
<svg class="a" style="left:1280px;top:10px" width="18" height="17" viewBox="0 0 18 17">
<g fill="none" stroke="#606060" stroke-width="1.1">
<path d="M4.5 4.5 V1.5 H13.5 V4.5"/>
<path d="M4.5 13.5 H3 A1.5 1.5 0 0 1 1.5 12 V6 A1.5 1.5 0 0 1 3 4.5 H15 A1.5 1.5 0 0 1 16.5 6 V12 A1.5 1.5 0 0 1 15 13.5 H13.5"/>
<rect x="4.5" y="8.5" width="9" height="7"/>
<path d="M6.5 11.5 H11.5 M6.5 13.5 H9" stroke-width="1"/>
<path d="M10.5 6.5 H12 M13.2 6.5 H14.8" stroke-width="1"/>
</g></svg>
<!-- top-right: preview -->
<svg class="a" style="left:1310px;top:10px" width="18" height="17" viewBox="0 0 18 17">
<g fill="none" stroke="#606060" stroke-width="1.1">
<path d="M13.5 5 V3 A1.5 1.5 0 0 0 12 1.5 H3 A1.5 1.5 0 0 0 1.5 3 V14 A1.5 1.5 0 0 0 3 15.5 H9"/>
<circle cx="10.6" cy="9.5" r="3.3"/>
<path d="M12.9 12 L15.6 14.7" stroke-width="2"/>
</g></svg>
<!-- top-right: link -->
<svg class="a" style="left:1340px;top:10px" width="18" height="17" viewBox="0 0 18 17">
<g fill="none" stroke="#555" stroke-width="1.15" stroke-linecap="round">
<path d="M7.4 3.9 L9.3 2.3 A3.3 3.3 0 0 1 14.3 6.9 L12.4 8.9"/>
<path d="M10.6 13.1 L8.7 14.7 A3.3 3.3 0 0 1 3.7 10.1 L5.6 8.1" transform="translate(0,0)"/>
<path d="M6.4 11 L11.6 6"/>
</g></svg>
<!-- dots -->
<svg class="a" style="left:1376px;top:12px" width="5" height="13" viewBox="0 0 5 13"><g fill="#636363"><circle cx="2.4" cy="2.4" r="1.4"/><circle cx="2.4" cy="6.5" r="1.4"/><circle cx="2.4" cy="10.6" r="1.4"/></g></svg>
<!-- close thin -->
<svg class="a" style="left:1404px;top:14px" width="9" height="9" viewBox="0 0 9 9"><path d="M1 1 L8 8 M8 1 L1 8" stroke="#555" stroke-width="1.1" fill="none"/></svg>
<!-- list icon -->
<svg class="a" style="left:1370px;top:100px" width="14" height="16" viewBox="0 0 14 16">
<defs><linearGradient id="gl" x1="0" y1="0" x2="0" y2="1"><stop offset=".6" stop-color="#fff"/><stop offset="1" stop-color="#ececec"/></linearGradient></defs>
<rect x="1.5" y="1.5" width="11" height="13" rx="1.3" fill="url(#gl)" stroke="#6f8299" stroke-width="1"/>
<g fill="#d9400a"><rect x="3" y="4" width="1.2" height="1.2"/><rect x="3" y="6" width="1.2" height="1.2"/><rect x="3" y="8" width="1.2" height="1.2"/><rect x="3" y="10" width="1.2" height="1.2"/></g>
<path d="M5.2 4.6 H10 M5.2 6.6 H10 M5.2 8.6 H10 M5.2 10.6 H10" stroke="#8c8c8c" stroke-width="1"/>
</svg>
<!-- bold X -->
<svg class="a" style="left:1396px;top:101px" width="13" height="13" viewBox="0 0 13 13"><path d="M1.8 1.8 L11.2 11.2 M11.2 1.8 L1.8 11.2" stroke="#000" stroke-width="2.4" fill="none"/></svg>
</div>
<div id="frame"></div>
</body>
</html>
